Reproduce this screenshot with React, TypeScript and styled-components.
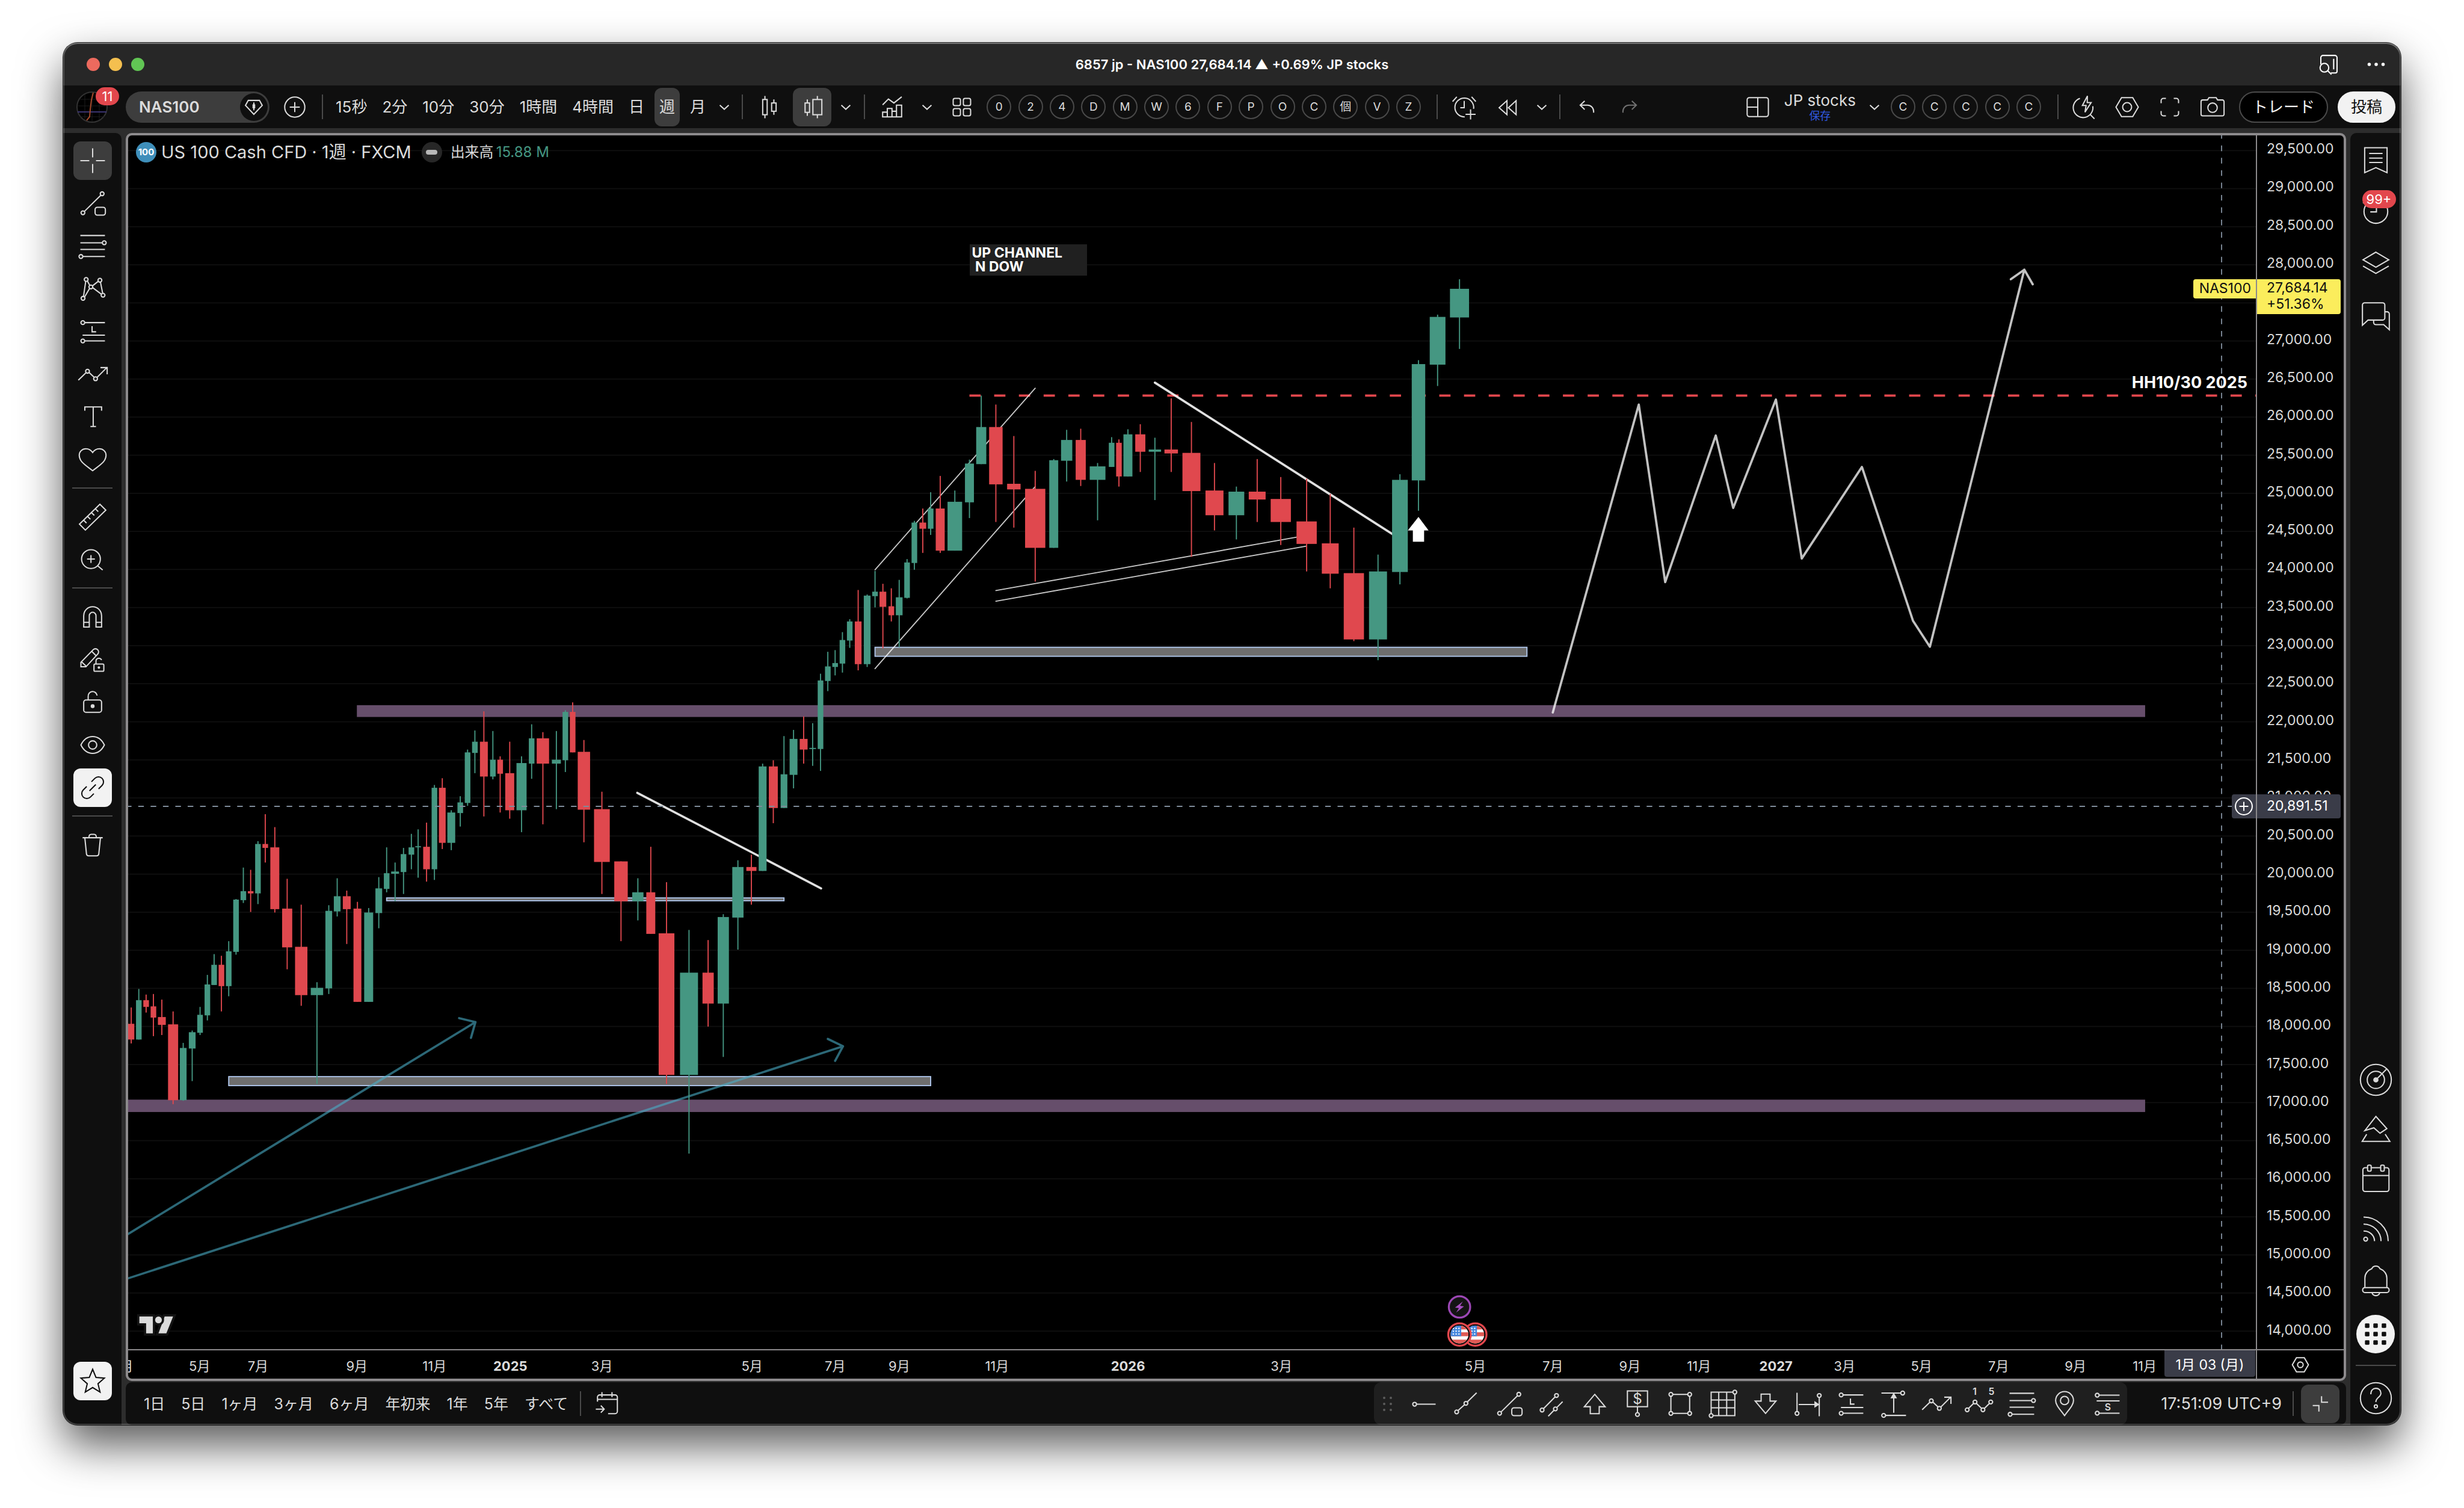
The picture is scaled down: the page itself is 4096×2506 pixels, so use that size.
import React from 'react';
import styled, { createGlobalStyle, css } from 'styled-components';

const c = {
  title: '#272727',
  bar: '#0f0f0f',
  gutter: '#2d2d2d',
  raised: '#3d3d3d',
  line: '#4a4a4a',
  text: '#dbdbdb',
  dim: '#707070',
  frame: '#8c8a8c',
  up: '#459782',
  down: '#e0484e',
  light: '#f2f2f2',
  alert: '#e2474d',
  quote: '#fbed5c',
  cursor: '#3a3c48',
};

const GlobalStyle = createGlobalStyle`
  *, *::before, *::after { box-sizing: border-box; }
  body { margin: 0; background: #fff; }
  body, button { font-family: Inter, "Noto Sans CJK JP", sans-serif; }
  button { appearance: none; border: 0; padding: 0; margin: 0; background: none; color: inherit; cursor: pointer; }
`;

/* ---------- window ---------- */

const Desktop = styled.div`
  display: flex;
  min-height: 100vh;
  padding: 71px 105px 138px;
  color: ${c.text};
`;

const Window = styled.div`
  position: relative;
  flex: 1;
  min-width: 0;
  display: flex;
  flex-direction: column;
  overflow: hidden;
  border-radius: 24px;
  background: ${c.gutter};
`;

const Shadow = styled.div`
  flex: 1;
  min-width: 0;
  display: flex;
  border-radius: 24px;
  box-shadow: 0 0 0 1px rgba(0, 0, 0, 0.8), 0 34px 72px rgba(0, 0, 0, 0.65);
`;

const Rim = styled.div`
  position: absolute;
  inset: 0;
  border-radius: 24px;
  pointer-events: none;
  box-shadow: inset 0 0 0 2px rgba(255, 255, 255, 0.2), inset 0 2px 0 rgba(255, 255, 255, 0.2);
`;

const TitleBar = styled.header`
  display: grid;
  grid-template-columns: 1fr auto 1fr;
  align-items: center;
  height: 71px;
  padding: 0 15px 0 39px;
  background: ${c.title};
`;

const Lights = styled.div`
  display: flex;
  gap: 15px;
`;

const Light = styled.button<{ $tone: string }>`
  width: 22px;
  height: 22px;
  border-radius: 50%;
  background: ${(p) => p.$tone};
`;

const WindowTitle = styled.h1`
  margin: 0;
  padding-right: 24px;
  font-size: 22px;
  line-height: 32px;
  font-weight: 600;
  color: #fff;
`;

const TitleActions = styled.div`
  display: flex;
  justify-content: flex-end;
  gap: 27px;
  color: #fff;
`;

/* ---------- shared controls ---------- */

const IconButton = styled.button<{ $on?: boolean; $light?: boolean }>`
  flex: none;
  display: flex;
  align-items: center;
  justify-content: center;
  width: 64px;
  height: 64px;
  border-radius: 12px;
  ${(p) => p.$on && css`background: ${c.raised};`}
  ${(p) => p.$light && css`background: ${c.light}; color: #0f0f0f;`}
  &:disabled { color: ${c.dim}; }
`;

const ChevronButton = styled.button`
  flex: none;
  display: flex;
  align-items: center;
  justify-content: center;
  width: 34px;
  height: 64px;
`;

const VLine = styled.span`
  flex: none;
  width: 2px;
  height: 41px;
  background: ${c.line};
`;

const HLine = styled.hr`
  width: 67px;
  height: 2px;
  margin: 7px 0 8px;
  border: 0;
  background: ${c.line};
`;

const Count = styled.span`
  position: absolute;
  display: flex;
  align-items: center;
  justify-content: center;
  height: 30px;
  border-radius: 15px;
  background: ${c.alert};
  color: #fff;
  font-size: 22px;
  line-height: 30px;
`;

const Svg = styled.svg`
  flex: none;
  display: block;
  overflow: visible;
`;

type IconProps = { box?: number; size?: number; d?: string; children?: React.ReactNode };

/* Strokes are about one unit wide; a 28-unit box is drawn 52px wide. */
const Icon = ({ box = 28, size = 52, d, children }: IconProps) => (
  <Svg width={size} height={size} viewBox={`0 0 ${box} ${box}`} fill="none" stroke="currentColor" strokeWidth={1.1} aria-hidden="true">
    {d && <path d={d} />}
    {children}
  </Svg>
);

const Dots = ({ at, r = 1.7 }: { at: number[][]; r?: number }) => (
  <>
    {at.map(([x, y]) => (
      <circle key={`${x}-${y}`} cx={x} cy={y} r={r} />
    ))}
  </>
);

const Chevron = () => <Icon d="M10 12.3l4 3.6 4-3.6" />;

/* ---------- top toolbar ---------- */

const Toolbar = styled.nav`
  display: flex;
  align-items: center;
  justify-content: space-between;
  height: 71px;
  padding: 0 9px 0 22px;
  background: ${c.bar};
`;

const Cluster = styled.div`
  display: flex;
  align-items: center;
`;

const Spaced = styled(Cluster)<{ $gap: number }>`
  gap: ${(p) => p.$gap}px;
`;

const Account = styled.button`
  position: relative;
  width: 52px;
  height: 52px;
  margin-right: 30px;
  ${Count} { left: 32px; top: -7px; width: 39px; }
`;

const SymbolButton = styled.button`
  display: flex;
  align-items: center;
  justify-content: space-between;
  width: 239px;
  height: 52px;
  padding: 0 3px 0 22px;
  border-radius: 26px;
  background: ${c.raised};
  font-size: 26px;
  line-height: 32px;
  font-weight: 600;
`;

const SymbolTag = styled.span`
  display: flex;
  align-items: center;
  justify-content: center;
  width: 46px;
  height: 46px;
  border-radius: 50%;
  background: ${c.bar};
`;

const TextButton = styled.button<{ $on?: boolean }>`
  flex: none;
  height: 64px;
  padding: 0 8px;
  border-radius: 12px;
  font-size: 26px;
  line-height: 32px;
  background: ${(p) => (p.$on ? c.raised : 'none')};
`;

const Letters = styled.div<{ $width: number }>`
  display: flex;
  justify-content: space-between;
  width: ${(p) => p.$width}px;
`;

const Letter = styled.button`
  width: 41px;
  height: 41px;
  border: 2px solid ${c.line};
  border-radius: 50%;
  font-size: 19px;
  line-height: 24px;
  text-align: center;
`;

const LayoutName = styled.button`
  display: flex;
  flex-direction: column;
  align-items: center;
  font-size: 26px;
  line-height: 30px;
  small { font-size: 18px; line-height: 22px; color: #3059e0; }
`;

const Pill = styled.button<{ $solid?: boolean }>`
  height: 52px;
  border: 2px solid ${(p) => (p.$solid ? c.light : c.line)};
  border-radius: 26px;
  padding: 0 20px;
  background: ${(p) => (p.$solid ? c.light : '#000')};
  color: ${(p) => (p.$solid ? '#0f0f0f' : c.light)};
  font-size: 26px;
  line-height: 32px;
`;

const Gap = styled.span<{ $w: number }>`
  flex: none;
  width: ${(p) => p.$w}px;
`;

/* ---------- body ---------- */

const Body = styled.div`
  flex: 1;
  display: grid;
  grid-template-columns: 97px minmax(0, 1fr) 84px;
  column-gap: 7px;
  padding-top: 8px;
`;

const ToolRail = styled.aside`
  display: flex;
  flex-direction: column;
  align-items: center;
  gap: 7px;
  padding: 14px 0 41px;
  border-radius: 0 10px 0 0;
  background: ${c.bar};
`;

const PanelRail = styled.aside`
  display: flex;
  flex-direction: column;
  align-items: center;
  padding: 1px 0;
  border-radius: 10px 0 0 0;
  background: ${c.bar};
  ${HLine} { margin: 8px 0 10px; }
`;

const PanelButton = styled.button<{ $short?: boolean }>`
  position: relative;
  display: flex;
  align-items: center;
  justify-content: center;
  width: 67px;
  height: ${(p) => (p.$short ? 82 : 87)}px;
  ${Count} { left: 11px; top: 7px; width: 56px; }
`;

const Apps = styled.span`
  display: flex;
  align-items: center;
  justify-content: center;
  width: 64px;
  height: 64px;
  border-radius: 50%;
  background: ${c.light};
  color: #0f0f0f;
`;

const Push = styled.div`
  flex: 1;
`;

const Center = styled.main`
  display: grid;
  grid-template-rows: minmax(0, 1fr) 71px;
  row-gap: 2px;
`;

/* ---------- chart ---------- */

const ChartFrame = styled.section`
  display: grid;
  grid-template-columns: minmax(0, 1fr) 146px;
  grid-template-rows: minmax(0, 1fr) 49px;
  border: 4px solid ${c.frame};
  border-radius: 10px;
  background: #000;
  overflow: hidden;
`;

const Pane = styled.div`
  position: relative;
`;

const PaneDrawing = styled.svg`
  position: absolute;
  inset: 0;
  width: 100%;
  height: 100%;
`;

const Legend = styled.div`
  position: relative;
  display: flex;
  align-items: center;
  height: 56px;
  padding-left: 13px;
  font-size: 29px;
  line-height: 36px;
`;

const SymbolBadge = styled.span`
  width: 34px;
  height: 34px;
  margin-right: 8px;
  border-radius: 50%;
  background: #3f8fba;
  color: #fff;
  font-size: 15px;
  line-height: 34px;
  font-weight: 700;
  text-align: center;
`;

const StatusDot = styled.span`
  display: flex;
  align-items: center;
  justify-content: center;
  width: 34px;
  height: 34px;
  margin: 0 14px 0 17px;
  border-radius: 50%;
  background: #272727;
  &::after { content: ""; width: 19px; height: 8px; border-radius: 4px; background: #b8b8b8; }
`;

const Volume = styled.span`
  font-size: 24px;
  line-height: 32px;
  b { margin-left: 4px; font-weight: 400; color: ${c.up}; }
`;

const Note = styled.p`
  position: absolute;
  width: 195px;
  height: 52px;
  margin: 0;
  padding: 3px 4px;
  background: #202020;
  color: #fff;
  font-size: 23px;
  line-height: 23px;
  font-weight: 700;
  white-space: pre;
`;

const LevelName = styled.p`
  position: absolute;
  right: 14px;
  margin: 0;
  color: #fff;
  font-size: 27px;
  line-height: 32px;
  font-weight: 700;
`;

const SymbolFlag = styled.span`
  position: absolute;
  right: 0;
  height: 32px;
  padding: 0 8px 0 10px;
  border-radius: 4px 0 0 4px;
  background: ${c.quote};
  color: #0f0f0f;
  font-size: 23px;
  line-height: 30px;
`;

const AddAtPrice = styled.button`
  position: absolute;
  right: 0;
  display: flex;
  align-items: center;
  justify-content: center;
  width: 40px;
  height: 40px;
  border-radius: 4px 0 0 4px;
  background: ${c.cursor};
  color: #fff;
`;

const PriceAxis = styled.div`
  position: relative;
  border-left: 2px solid ${c.frame};
  font-size: 23px;
  line-height: 28px;
`;

const PriceList = styled.ol`
  display: flex;
  flex-direction: column;
  justify-content: space-between;
  height: 100%;
  margin: 0;
  padding: 8px 0 18px 16px;
  list-style: none;
  li { height: 28px; }
`;

const PriceTag = styled.div<{ $cursor?: boolean }>`
  position: absolute;
  left: 0;
  width: 139px;
  height: ${(p) => (p.$cursor ? 40 : 58)}px;
  padding: ${(p) => (p.$cursor ? 5 : 1)}px 0 0 16px;
  border-radius: 0 4px 4px 0;
  background: ${(p) => (p.$cursor ? c.cursor : c.quote)};
  color: ${(p) => (p.$cursor ? '#fff' : '#0f0f0f')};
  line-height: ${(p) => (p.$cursor ? 28 : 27)}px;
`;

const TimeAxis = styled.div`
  position: relative;
  overflow: hidden;
  border-top: 2px solid ${c.frame};
  font-size: 22px;
  line-height: 28px;
`;

const TimeLabel = styled.span<{ $year: boolean }>`
  position: absolute;
  top: 12px;
  width: 80px;
  margin-left: -39px;
  text-align: center;
  font-weight: ${(p) => (p.$year ? 700 : 400)};
`;

const TimeTag = styled.span`
  position: absolute;
  right: 1px;
  top: 0;
  width: 151px;
  height: 44px;
  padding-top: 10px;
  border-radius: 0 0 4px 4px;
  background: ${c.cursor};
  color: #fff;
  font-size: 23px;
  text-align: center;
`;

const AxisCorner = styled.button`
  display: flex;
  align-items: center;
  justify-content: center;
  border-top: 2px solid ${c.frame};
  border-left: 2px solid ${c.frame};
`;

/* ---------- bottom bar ---------- */

const BottomBar = styled.footer`
  display: flex;
  align-items: center;
  padding: 0 11px 0 22px;
  border-radius: 10px;
  background: ${c.bar};
`;

const RangeButton = styled(TextButton)`
  font-size: 25px;
`;

const DrawTools = styled.div`
  display: flex;
  align-items: center;
  gap: 7px;
  align-self: stretch;
  padding: 0 1px 0 15px;
  border-radius: 12px;
  background: #1f1f1f;
`;

const Grip = styled.span`
  display: grid;
  grid-template-columns: repeat(2, 4px);
  gap: 6px 7px;
  width: 29px;
  i { width: 4px; height: 4px; border-radius: 50%; background: #5c5c5c; }
`;

const Clock = styled.time`
  margin: 0 18px 0 auto;
  font-size: 27px;
  line-height: 32px;
`;

/* ---------- data ---------- */

const intervals = ['15秒', '2分', '10分', '30分', '1時間', '4時間', '日', '週', '月'];
const favourites = ['0', '2', '4', 'D', 'M', 'W', '6', 'F', 'P', 'O', 'C', '個', 'V', 'Z'];
const ranges = ['1日', '5日', '1ヶ月', '3ヶ月', '6ヶ月', '年初来', '1年', '5年', 'すべて'];

const TOP_PRICE = 29500;
const STEP = 500;
/* The last-price tag sits on this level, so its own label is left out. */
const TAGGED_PRICE = 27500;
const prices = Array.from({ length: 32 }, (_, i) => TOP_PRICE - i * STEP);
const money = (v: number) => v.toLocaleString('en-US', { minimumFractionDigits: 2 });

/* The pane is drawn on a canvas of these units. */
const PANE = { x: 228, y: 240, w: 3786, h: 2160 };
const left = (x: number) => `${((x - PANE.x) / PANE.w) * 100}%`;
const top = (y: number) => `${((y - PANE.y) / PANE.h) * 100}%`;
const gridY = (i: number) => 267 + i * 67.77;

const months: [string, number][] = [
  ['3月', 217], ['5月', 354], ['7月', 458], ['9月', 634], ['11月', 772], ['2025', 907], ['3月', 1070],
  ['5月', 1337], ['7月', 1485], ['9月', 1599], ['11月', 1773], ['2026', 2006], ['3月', 2279], ['5月', 2624],
  ['7月', 2762], ['9月', 2899], ['11月', 3022], ['2027', 3159], ['3月', 3281], ['5月', 3418], ['7月', 3555],
  ['9月', 3692], ['11月', 3815],
];

/* A bar is: left, right, body top, body bottom, wick top, wick bottom, 1 for a rise. */
type Bar = [number, number, number, number, number, number, 0 | 1];
type Series = { x: number; y: number; kx: number; ky: number; bars: Bar[] };

const series: Series[] = [
  {
    x: 210, y: 1200, kx: 0.574, ky: 0.5421,
    bars: [
      [31, 51, 1146, 1197, 1092, 1210, 0], [56, 73, 1068, 1197, 1031, 1197, 1], [78, 96, 1068, 1090, 1050, 1109, 0],
      [101, 118, 1088, 1125, 1048, 1186, 0], [124, 148, 1123, 1149, 1066, 1182, 0], [155, 186, 1147, 1396, 1105, 1409, 0],
      [192, 213, 1225, 1396, 1208, 1398, 1], [220, 240, 1173, 1227, 1168, 1334, 1], [246, 263, 1116, 1175, 1090, 1182, 1],
      [268, 286, 1016, 1118, 985, 1134, 1], [289, 307, 952, 1018, 917, 1018, 1], [312, 329, 952, 1022, 922, 1105, 0],
      [335, 352, 908, 1022, 874, 1055, 1], [357, 375, 738, 909, 736, 919, 1], [380, 397, 710, 740, 633, 749, 1],
      [402, 420, 710, 718, 640, 778, 0], [425, 443, 555, 718, 546, 753, 1], [448, 465, 555, 568, 457, 616, 0],
      [472, 500, 566, 769, 500, 780, 0], [509, 540, 767, 895, 670, 967, 0], [549, 587, 893, 1051, 754, 1087, 0],
      [598, 636, 1028, 1051, 1009, 1343, 1], [643, 664, 775, 1029, 756, 1048, 1], [669, 690, 727, 777, 668, 793, 1],
      [697, 721, 727, 769, 708, 884, 0], [730, 754, 767, 1074, 745, 1074, 0], [763, 791, 780, 1074, 766, 1074, 1],
      [798, 819, 701, 782, 664, 832, 1], [824, 841, 651, 703, 566, 714, 1], [847, 871, 646, 653, 616, 743, 1],
      [876, 894, 588, 647, 568, 719, 1], [901, 918, 566, 590, 522, 638, 1], [922, 939, 563, 566, 507, 666, 1],
      [946, 967, 564, 638, 485, 679, 0], [972, 990, 371, 638, 362, 673, 1], [995, 1016, 371, 552, 339, 572, 0],
      [1021, 1045, 452, 552, 445, 576, 1], [1052, 1070, 419, 454, 398, 498, 1], [1075, 1092, 255, 421, 245, 430, 1],
      [1098, 1115, 220, 256, 183, 323, 1], [1122, 1146, 220, 334, 120, 465, 0], [1153, 1171, 279, 334, 184, 343, 1],
      [1176, 1193, 279, 325, 267, 452, 0], [1200, 1228, 323, 445, 220, 472, 0], [1235, 1267, 290, 445, 267, 517, 1],
      [1274, 1291, 208, 291, 162, 341, 1], [1298, 1336, 208, 291, 188, 491, 0], [1345, 1373, 279, 291, 184, 441, 1],
      [1378, 1396, 122, 280, 116, 319, 1], [1401, 1418, 122, 255, 90, 255, 0], [1425, 1463, 253, 443, 214, 550, 0],
      [1476, 1524, 441, 614, 384, 719, 0],
    ],
  },
  {
    x: 1000, y: 1100, kx: 0.4464, ky: 0.6378,
    bars: [
      [208, 262, 677, 789, 677, 900, 0], [280, 325, 764, 789, 724, 842, 1], [336, 372, 764, 880, 637, 880, 0],
      [385, 448, 878, 1273, 735, 1298, 0], [470, 542, 988, 1273, 869, 1493, 1], [560, 605, 988, 1074, 897, 1138, 0],
      [620, 665, 833, 1074, 825, 1223, 1], [679, 724, 693, 834, 674, 924, 1], [735, 775, 693, 704, 659, 798, 0],
      [784, 815, 412, 704, 405, 704, 1], [824, 860, 412, 528, 395, 571, 0], [871, 898, 434, 528, 328, 528, 1],
      [907, 939, 336, 436, 310, 474, 1], [948, 979, 336, 365, 273, 405, 0], [986, 1012, 361, 364, 292, 411, 1],
      [1019, 1042, 172, 364, 154, 425, 1], [1048, 1071, 133, 174, 93, 202, 1], [1077, 1100, 124, 135, 88, 158, 1],
      [1107, 1129, 60, 125, 38, 151, 1], [1136, 1158, 8, 61, 2, 82, 1],
    ],
  },
  {
    x: 1400, y: 420, kx: 0.8291, ky: 0.5102,
    bars: [
      [146, 160, 1343, 1492, 1233, 1513, 0], [165, 180, 1252, 1492, 1249, 1501, 1], [183, 195, 1239, 1254, 1166, 1294, 1],
      [199, 213, 1239, 1292, 1211, 1436, 0], [218, 230, 1290, 1321, 1227, 1343, 0], [234, 248, 1258, 1321, 1198, 1432, 1],
      [252, 264, 1137, 1260, 1125, 1262, 1], [268, 280, 998, 1139, 992, 1162, 1], [285, 299, 998, 1019, 949, 1103, 0],
      [303, 315, 949, 1019, 892, 1041, 1], [320, 339, 949, 1096, 835, 1103, 0], [345, 376, 925, 1096, 886, 1096, 1],
      [382, 402, 792, 927, 778, 982, 1], [406, 428, 664, 794, 555, 794, 1], [434, 463, 664, 864, 586, 996, 0],
      [473, 502, 862, 882, 696, 1015, 0], [511, 555, 880, 1086, 817, 1203, 0], [563, 583, 780, 1086, 776, 1086, 1],
      [589, 613, 710, 782, 674, 855, 1], [620, 642, 710, 849, 670, 870, 0], [650, 684, 802, 849, 790, 990, 1],
      [691, 703, 719, 804, 700, 804, 1], [707, 719, 719, 837, 708, 872, 0], [722, 742, 690, 837, 672, 837, 1],
      [748, 770, 690, 751, 655, 821, 0], [777, 803, 743, 751, 702, 919, 1], [811, 839, 743, 757, 564, 821, 0],
      [849, 888, 755, 888, 647, 1117, 0], [899, 937, 886, 972, 790, 1025, 0], [948, 982, 890, 972, 872, 1056, 1],
      [991, 1028, 890, 917, 776, 996, 0], [1038, 1082, 915, 996, 839, 1076, 0], [1094, 1137, 994, 1072, 845, 1168, 0],
      [1148, 1184, 1070, 1176, 898, 1227, 0], [1195, 1239, 1174, 1405, 1015, 1411, 0], [1250, 1288, 1168, 1405, 1109, 1478, 1],
      [1299, 1333, 849, 1170, 829, 1213, 1], [1341, 1370, 445, 851, 431, 956, 1], [1380, 1414, 280, 447, 272, 521, 1],
      [1423, 1464, 182, 282, 149, 392, 1],
    ],
  },
];

const Candles = () => (
  <>
    {series.flatMap((s) =>
      s.bars.map(([l, r, bodyTop, bodyBottom, wickTop, wickBottom, rise]) => {
        const x1 = Math.round(s.x + l * s.kx);
        const x2 = Math.round(s.x + r * s.kx);
        const y = (v: number) => Math.round(s.y + v * s.ky);
        return (
          <g key={x1} fill={rise ? c.up : c.down}>
            <rect x={(x1 + x2) / 2 - 1} y={y(wickTop)} width={2} height={y(wickBottom) - y(wickTop)} />
            <rect x={x1} y={y(bodyTop)} width={x2 - x1} height={Math.max(2, y(bodyBottom) - y(bodyTop))} />
          </g>
        );
      }),
    )}
  </>
);

const star = 'M0-2l.6 1.3 1.4.1-1.1.9.4 1.4L0 1l-1.3.7.4-1.4L-2-.6l1.4-.1z';

const FlagEvent = ({ x }: { x: number }) => (
  <g transform={`translate(${x} 2374)`}>
    <circle r={20} fill="#0a0a0a" stroke={c.alert} strokeWidth={3.5} />
    <g clipPath="url(#flagDisc)">
      <rect x={-16} y={-16} width={32} height={32} fill="#fafafa" />
      <path d="M-16-16h32v7h-32zM-16-4h32v7h-32zM-16 9h32v8h-32z" fill="#df5a55" />
      <rect x={-16} y={-16} width={19} height={19} fill="#4387dd" />
      {[-11, -6, -1].map((sx) => [-11, -6, -1].map((sy) => <path key={`${sx}${sy}`} transform={`translate(${sx} ${sy})`} d={star} fill="#fff" />))}
    </g>
  </g>
);

const ChartDrawing = () => (
  <PaneDrawing viewBox={`${PANE.x} ${PANE.y} ${PANE.w} ${PANE.h}`} preserveAspectRatio="none" role="img" aria-label="NAS100">
    <defs>
      <clipPath id="flagDisc"><circle r={16} /></clipPath>
    </defs>
    {prices.map((p, i) => (
      <rect key={p} x={PANE.x} y={gridY(i) - 1} width={PANE.w} height={2} fill="#0f0f0f" />
    ))}
    <g fill="#664e6b">
      <rect x={635} y={1254} width={3182} height={21} />
      <rect x={228} y={1956} width={3589} height={22} />
    </g>
    <g fill="#6e6e6e" stroke="#aec5ea" strokeWidth={2}>
      <rect x={407} y={1915} width={1249} height={16} />
      <rect x={688} y={1597} width={707} height={5} />
      <rect x={1557} y={1151} width={1160} height={16} />
    </g>
    <g stroke="#49adc6" strokeOpacity={0.6} strokeWidth={4} strokeLinecap="round" strokeLinejoin="round" fill="none">
      <path d="M228 2195L846 1818M817 1811L846 1818 838 1846" />
      <path d="M228 2274L1500 1861M1473 1848L1500 1861 1486 1887" />
    </g>
    <path d="M1725 703H4014" stroke={c.alert} strokeWidth={4} strokeDasharray="20 24" />
    <g stroke="#fff" strokeLinecap="round" strokeLinejoin="round" fill="none">
      <path d="M1134 1410L1461 1580M2055 680L2491 958" strokeOpacity={0.88} strokeWidth={4} />
      <path d="M1557 1013L1842 690M1557 1189L1842 865M1772 1050L2324 952M1772 1069L2324 971" strokeOpacity={0.78} strokeWidth={2} />
      <path d="M2763 1267L2916 719 2963 1035 3053 774 3084 903 3160 710 3206 993 3313 830 3404 1104 3434 1150 3602 479M3578 496L3602 479 3617 505" strokeOpacity={0.76} strokeWidth={4} />
    </g>
    <Candles />
    <path d="M2524 919l18 24h-8v20h-20v-20h-9z" fill="#fff" />
    <g stroke="#7f8c9a" strokeWidth={2} strokeDasharray="10 12" strokeDashoffset={4}>
      <path d="M228 1434H3972" />
      <path d="M3953 240V2400" />
    </g>
    <g fill={c.text} stroke="#131313" strokeWidth={8} paintOrder="stroke">
      <path d="M248 2342h24v30h-12v-18h-12z" />
      <path d="M293 2342h15l-12 30h-14z" />
      <circle cx={282} cy={2348} r={6} />
    </g>
    <circle cx={2597} cy={2325} r={19} fill="#141414" stroke="#9c47b5" strokeWidth={3.5} />
    <path d="M2603 2315l-14 11 7 1-5 8 14-11-7-1z" fill="#a64fc0" />
    <FlagEvent x={2625} />
    <FlagEvent x={2597} />
  </PaneDrawing>
);

/* ---------- drawing tool icons ---------- */

const TrendTemplate = () => (
  <Icon d="M6.6 21.2L21.3 6.7">
    <Dots at={[[5.3, 22.4], [22.5, 5.4]]} />
    <rect x={16.2} y={17.5} width={9.2} height={7} rx={2} />
  </Icon>
);
const Fib = () => (
  <Icon d="M3 4.5h22M3 11h19.6M3 17h22M5.3 23.3H25">
    <Dots at={[[24.4, 11], [3.5, 23.3]]} />
  </Icon>
);
const LongPosition = () => (
  <Icon d="M7 6h18M5 17.2h20M7 22.4h18M13.5 9.2v5h3.6">
    <Dots at={[[5.2, 6], [5.2, 22.4]]} />
  </Icon>
);
const PathArrow = () => (
  <Icon d="M1.2 19.3L8 12.6M10.8 12.4l4.6 4.3M17.9 16.8L26.7 8M21 8h6v6">
    <Dots at={[[9.4, 11.3], [16.6, 18]]} />
  </Icon>
);

const leftTools: Record<string, React.ReactNode> = {
  トレンドライン: <TrendTemplate />,
  フィボナッチ: <Fib />,
  パターン: (
    <Icon d="M5.8 20.9l2-13.6M6.7 21.4l4.6-7.8M9.3 7l2.2 4M13.8 11.4l5.3-4.2M14.1 13l7.7 5.8M21 8l2 10">
      <Dots at={[[5.4, 22.5], [8.2, 5.6], [12.4, 12.3], [20.5, 6.3], [23.3, 19.7]]} />
    </Icon>
  ),
  予測: <LongPosition />,
  ブラシ: <PathArrow />,
  テキスト: <Icon d="M7 8.4V5h15v3.4M14.5 5v17.5M12 22.5h5" />,
  アイコン: <Icon d="M14 7.5C12.5 5.3 10.5 4.2 8 4.2 4.6 4.2 2 6.7 2 10c0 6 6 9 12 13.8 6-4.8 12-7.8 12-13.8 0-3.3-2.6-5.8-6-5.8-2.5 0-4.5 1.1-6 3.3z" />,
};

const measureTools: Record<string, React.ReactNode> = {
  計測: <Icon d="M2.2 20.5L20.5 2.7l5.3 5.3L7.5 25.8zM6 17l2.5 2.5M9.500 13.600l2.500 2.500M13 10.200l2.500 2.500M16.500 6.800L19 9.300" />,
  ズーム: <Icon d="M18.5 19.500l4.500 3.800M9 13.500h7M12.500 10v7"><circle cx={12.5} cy={13.5} r={8.4} /></Icon>,
};

const lockTools: Record<string, React.ReactNode> = {
  マグネット: <Icon d="M6 23.200V13a8 8 0 0 1 16 0v10.200h-5V13a3 3 0 0 0-6 0v10.200zM6 19h5M17 19h5" />,
  描画モード: (
    <Icon d="M3.5 20.500v-4L14.500 5.200a2.500 2.500 0 0 1 4 4L8 20.500zM13 6.500l4 4M4 16l4.300 4M17 18v-2.500a2.600 2.600 0 0 1 5-1">
      <rect x={15.2} y={18} width={8.8} height={6.5} rx={1} />
      <circle cx={19.6} cy={21.2} r={0.6} fill="currentColor" />
    </Icon>
  ),
  ロック: (
    <Icon d="M10 12V9a4 4 0 0 1 8-1">
      <rect x={6} y={12} width={16} height={11} rx={2} />
      <circle cx={14} cy={17.5} r={1.2} fill="currentColor" />
    </Icon>
  ),
  表示: <Icon d="M3.5 14C6 9 10 6.500 14 6.500S22 9 24.500 14C22 19 18 21.500 14 21.500S6 19 3.500 14z"><circle cx={14} cy={14} r={3.7} /></Icon>,
};

const drawTools: Record<string, React.ReactNode> = {
  水平レイ: <Icon d="M7.5 14.300h17"><Dots at={[[5.7, 14.3]]} /></Icon>,
  レイ: <Icon d="M6.2 20l6-5.300M14.600 12.300L23 4"><Dots at={[[5.1, 21.2], [13.4, 13.5]]} /></Icon>,
  テンプレート: <TrendTemplate />,
  平行チャネル: <Icon d="M6.3 18.300L16.800 7.700M10.600 25l5.200-5.300M18.200 17.300l5.300-5.300"><Dots at={[[5.1, 19.5], [18, 6.5], [17, 18.5]]} /></Icon>,
  上矢印: <Icon d="M14 5.500l9.300 11H18v6.200h-8v-6.200H4.700z" />,
  価格ラベル: (
    <Icon d="M14 16.500v5.300">
      <rect x={5} y={2.4} width={18} height={14.1} />
      <Dots at={[[14, 23.5]]} />
      <text x={14} y={14} fontSize={13} textAnchor="middle" fill="currentColor" stroke="none">$</text>
    </Icon>
  ),
  長方形: <Icon d="M7.5 5.500h13M7.500 22.500h13M5.700 7.300v13.400M22.500 7.300v13.400"><Dots at={[[5.7, 5.5], [22.5, 5.5], [5.7, 22.5], [22.5, 22.5]]} /></Icon>,
  ギャンボックス: <Icon d="M23 3.500H3.500v19.200M24.700 5.300v19.200H5.200M3.500 10.500h21.200M3.500 17.500h21.200M10.300 3.500v21M17.400 3.500v21"><Dots at={[[24.7, 3.5], [3.5, 24.5]]} /></Icon>,
  下矢印: <Icon d="M14 22.500l-9.300-11H10V5.300h8v6.200h5.300z" />,
  日付範囲: <Icon d="M3.9 4v16.700M23.800 25V8.300M5.400 14.500h15"><path d="M20 12.500l3 2-3 2z" fill="currentColor" /><Dots at={[[3.9, 22.5], [23.8, 6.5]]} /></Icon>,
  買いポジション: <LongPosition />,
  価格範囲: <Icon d="M3 4.300h17M6.700 24.300H25M14 8v14"><path d="M12 8.500l2-3.500 2 3.500z" fill="currentColor" /><Dots at={[[22, 4.3], [5, 24.3]]} /></Icon>,
  パス: <PathArrow />,
  エリオット波動: (
    <Icon d="M4.5 18l4.600-4.500M11.600 13.600l4.600 4.400M18.700 18l4.500-4.400">
      <Dots at={[[3.3, 19.3], [10.3, 12.3], [17.4, 19.3], [24.4, 12.3]]} />
      <g fontSize={8.5} fontWeight={600} textAnchor="middle" fill="currentColor" stroke="none">
        <text x={10} y={6}>1</text>
        <text x={25} y={6}>5</text>
      </g>
    </Icon>
  ),
  フィボナッチ: <Fib />,
  ピン: <Icon d="M14 24.500C10 19 6 15 6 11a8 8 0 0 1 16 0c0 4-4 8-8 13.500z"><circle cx={14} cy={11} r={3.7} /></Icon>,
  売りポジション: (
    <Icon d="M7 6.200h18M4.500 11.300H25M7 22.300h18">
      <Dots at={[[5, 6.2], [5, 22.3]]} />
      <text x={14.5} y={20} fontSize={8.5} fontWeight={600} textAnchor="middle" fill="currentColor" stroke="none">S</text>
    </Icon>
  ),
};

const ToolGroup = ({ tools }: { tools: Record<string, React.ReactNode> }) => (
  <>
    {Object.entries(tools).map(([name, icon]) => (
      <IconButton key={name} aria-label={name}>{icon}</IconButton>
    ))}
  </>
);

const LetterRow = ({ items, width }: { items: string[]; width: number }) => (
  <Letters $width={width}>
    {items.map((l, i) => (
      <Letter key={i}>{l}</Letter>
    ))}
  </Letters>
);

/* ---------- sections ---------- */

const TopToolbar = () => (
  <Toolbar>
    <Cluster>
      <Account aria-label="アカウント">
        <Svg width={52} height={52} viewBox="0 0 52 52">
          <circle cx={26} cy={26} r={25} fill="#000" stroke="#333" strokeWidth={2} />
          <path d="M6 13h40M3 24h46M6 42h40M14 5v42M26 2v48M38 5v42" stroke="#1c1c1c" />
          <path d="M2 34h48" stroke="#3b3470" strokeWidth={2} />
          <path d="M17 48l5-6 1-12 2-16 3-12" fill="none" stroke="#a3492c" strokeWidth={2} />
        </Svg>
        <Count>11</Count>
      </Account>
      <SymbolButton>
        NAS100
        <SymbolTag>
          <Icon d="M9 8h10l2.500 4.500L14 20.500 6.500 12.500zM14 9.800v7"><rect x={12.8} y={11.5} width={2.4} height={3.6} fill="currentColor" stroke="none" /></Icon>
        </SymbolTag>
      </SymbolButton>
      <Gap $w={10} />
      <IconButton aria-label="比較"><Icon d="M14 9.500v9M9.500 14h9"><circle cx={14} cy={14} r={9} /></Icon></IconButton>
      <Gap $w={13} />
      <VLine />
      <Gap $w={13} />
      <Spaced $gap={9}>
        {intervals.map((t) => (
          <TextButton key={t} $on={t === '週'}>{t}</TextButton>
        ))}
      </Spaced>
      <Gap $w={6} />
      <ChevronButton aria-label="時間足"><Chevron /></ChevronButton>
      <Gap $w={12} />
      <VLine />
      <Gap $w={12} />
      <Spaced $gap={7}>
        <IconButton aria-label="ローソク足"><Icon d="M10 4v3.200M10 20.800V24M18 7.200v3.100M18 17.700v3.100"><rect x={8} y={7.2} width={4} height={13.6} /><rect x={16} y={10.3} width={4} height={7.4} /></Icon></IconButton>
        <IconButton $on aria-label="出来高ローソク足"><Icon d="M9.7 7.200v3.100M9.700 18.700v3.100M18.700 4v3.200M18.700 20.800V24"><rect x={7.7} y={10.3} width={4} height={8.4} /><rect x={14.7} y={7.2} width={8} height={13.6} /></Icon></IconButton>
        <ChevronButton aria-label="チャートタイプ"><Chevron /></ChevronButton>
      </Spaced>
      <Gap $w={13} />
      <VLine />
      <Gap $w={13} />
      <Spaced $gap={9}>
        <IconButton aria-label="インジケーター"><Icon d="M5.5 12l5.200-5.200 4.900 3.500 7-5.500M5.500 22.700v-4.200h4.200v-3.300h4.200v2.500h4v-5.500h4.600v10.500zM9.700 18.500v4.200M13.900 17.700v5M17.900 17.700v5" /></IconButton>
        <ChevronButton aria-label="お気に入り"><Chevron /></ChevronButton>
        <IconButton aria-label="テンプレート">
          <Icon>
            {[6.2, 15.3].map((x) => [6.2, 15.3].map((y) => <rect key={`${x}${y}`} x={x} y={y} width={6.5} height={6.5} rx={1.5} />))}
          </Icon>
        </IconButton>
        <LetterRow items={favourites} width={722} />
      </Spaced>
      <Gap $w={26} />
      <VLine />
      <Gap $w={12} />
      <Spaced $gap={8}>
        <IconButton aria-label="アラート"><Icon d="M22.4 15.500A8.400 8.400 0 1 0 14.500 22.700M3.600 9l3.800-4.200M20.600 4.800L24.400 9M14 8.500v6h-3.500M19.700 16v9M15.200 20.500h9" /></IconButton>
        <IconButton aria-label="リプレイ"><Icon d="M13.5 8.200v12.500L6.500 14.500zM21.700 8.200v12.500L14.800 14.500z" /></IconButton>
        <ChevronButton aria-label="リプレイ設定"><Chevron /></ChevronButton>
      </Spaced>
      <Gap $w={12} />
      <VLine />
      <Gap $w={12} />
      <Spaced $gap={7}>
        <IconButton aria-label="元に戻す"><Icon d="M8 12.300h6.500a5.500 5.500 0 0 1 5.500 5.500V19M12 8.500l-4 3.800 4 3.800" /></IconButton>
        <IconButton aria-label="やり直す" disabled><Icon d="M20 12.300h-6.500A5.500 5.500 0 0 0 8 17.800V19M16 8.500l4 3.800-4 3.800" /></IconButton>
      </Spaced>
    </Cluster>
    <Cluster>
      <IconButton aria-label="レイアウト"><Icon d="M14 5.500v17M4.500 14H14"><rect x={4.5} y={5.5} width={19} height={17} rx={2} /></Icon></IconButton>
      <Gap $w={12} />
      <LayoutName>JP stocks<small>保存</small></LayoutName>
      <Gap $w={14} />
      <ChevronButton aria-label="レイアウト管理"><Chevron /></ChevronButton>
      <Gap $w={10} />
      <LetterRow items={['C', 'C', 'C', 'C', 'C']} width={250} />
      <Gap $w={27} />
      <VLine />
      <Gap $w={11} />
      <Spaced $gap={7}>
        <IconButton aria-label="クイック検索"><Icon d="M10 6.200a8.800 8.800 0 1 0 11.500 7M19 20.500l4 4M16.700 4l-4.500 8.500h3.300l-1 6 5.500-8.500h-3.500z" /></IconButton>
        <IconButton aria-label="設定"><Icon d="M9 5.500h10l5 8.500-5 8.500H9L4 14z"><circle cx={14} cy={14} r={4} /></Icon></IconButton>
        <IconButton aria-label="全画面"><Icon d="M6.2 10.500V8.200a2 2 0 0 1 2-2h2.300M17.500 6.200h2.300a2 2 0 0 1 2 2v2.300M21.800 17.500v2.300a2 2 0 0 1-2 2h-2.300M10.500 21.800H8.200a2 2 0 0 1-2-2v-2.300" /></IconButton>
        <IconButton aria-label="スナップショット"><Icon d="M9.5 7.600l1.300-2.100h6.400l1.300 2.100h4.300a1.500 1.500 0 0 1 1.500 1.500v11.200a1.500 1.500 0 0 1-1.500 1.500H5.200a1.500 1.500 0 0 1-1.500-1.500V9.100a1.500 1.500 0 0 1 1.500-1.500z"><circle cx={14} cy={14.5} r={4.2} /></Icon></IconButton>
      </Spaced>
      <Gap $w={12} />
      <Spaced $gap={16}>
        <Pill>トレード</Pill>
        <Pill $solid>投稿</Pill>
      </Spaced>
    </Cluster>
  </Toolbar>
);

const LeftRail = () => (
  <ToolRail>
    <IconButton $on aria-label="カーソル"><Icon d="M3 14h8M17 14h8M14 3v8M14 17v8" /></IconButton>
    <ToolGroup tools={leftTools} />
    <HLine />
    <ToolGroup tools={measureTools} />
    <HLine />
    <ToolGroup tools={lockTools} />
    <IconButton $light aria-label="同期">
      <Icon><path transform="rotate(-45 14 14)" d="M11 9.500H6.600a4.500 4.500 0 0 0 0 9H11M17 9.500h4.400a4.500 4.500 0 0 1 0 9H17M10 14h8" /></Icon>
    </IconButton>
    <HLine />
    <IconButton aria-label="削除"><Icon d="M5 7.600h18M7 7.600l1.500 14.500a2 2 0 0 0 2 1.700h7a2 2 0 0 0 2-1.700L21 7.600M10.700 7.500c0-2 .8-2.900 2-2.900h2.600c1.200 0 2 .9 2 2.900" /></IconButton>
    <Push />
    <IconButton $light aria-label="お気に入りツール"><Icon d="M14 3.500l3 7.300 7.500.6-5.700 5 1.800 7.500L14 19.800l-6.600 4.100 1.800-7.500-5.700-5 7.500-.6z" /></IconButton>
  </ToolRail>
);

const Wide = (props: IconProps) => <Icon box={36} size={67} {...props} />;

const RightRail = () => (
  <PanelRail>
    <PanelButton aria-label="ウォッチリスト"><Wide d="M8 7.200h20v22.300l-10-4.500-10 4.500zM12 12.400h12M12 16.500h12M12 20.400h12" /></PanelButton>
    <PanelButton aria-label="アラート 99+">
      <Wide d="M18.5 9v8.800h-5.500M6.500 10l3-3"><circle cx={18} cy={17.4} r={10.6} /></Wide>
      <Count>99+</Count>
    </PanelButton>
    <PanelButton aria-label="オブジェクトツリー"><Wide d="M18 7l11.500 6.800L18 20.500 6.500 13.800zM6.500 19.400L18 26l11.500-6.600" /></PanelButton>
    <PanelButton aria-label="チャット"><Wide d="M6 25.500V7.500a2 2 0 0 1 2-2h16a2 2 0 0 1 2 2v11.400a2 2 0 0 1-2 2H11zM26 13.500h2a2 2 0 0 1 2 2v14l-5-4.500h-7a2 2 0 0 1-2-2v-2" /></PanelButton>
    <Push />
    <PanelButton $short aria-label="スクリーナー"><Wide d="M19.5 16.500l8-8"><circle cx={18} cy={18} r={13.8} /><circle cx={18} cy={18} r={7.7} /><circle cx={18} cy={18} r={1.8} fill="currentColor" /></Wide></PanelButton>
    <PanelButton $short aria-label="パイン"><Wide d="M18 6.600l9.800 10.900-6.100 4.100-5.500-4.800-8 2.400zM9.800 22.500l-4 6.400h24.700l-4.200-6.500" /></PanelButton>
    <PanelButton $short aria-label="カレンダー"><Wide d="M10.5 8.300H8.400a2 2 0 0 0-2 2v17.300a2 2 0 0 0 2 2h19.300a2 2 0 0 0 2-2V10.300a2 2 0 0 0-2-2h-2.200M14 8.300h8M6.400 15.300h23.300"><rect x={10.6} y={6} width={3.2} height={5.4} rx={1} /><rect x={22.3} y={6} width={3.2} height={5.4} rx={1} /></Wide></PanelButton>
    <PanelButton aria-label="ニュース"><Wide d="M7 19.700a9.500 9 0 0 1 9.800 9M7 13.600a15.600 15.100 0 0 1 15.600 15.100M7 7.300a22 21.400 0 0 1 22 21.400"><circle cx={8.9} cy={27} r={1.7} /></Wide></PanelButton>
    <PanelButton aria-label="通知"><Wide d="M8.2 23.500V15c0-3.800 2.500-7 6.200-8.400.6-1.500 1.700-2.300 3.600-2.300s3 .8 3.600 2.300C25.300 8 27.800 11.200 27.800 15v8.500M14.500 28c.4 1.600 1.700 2.700 3.500 2.700s3.100-1.100 3.500-2.700"><rect x={6.2} y={23.5} width={23.6} height={4.4} rx={2} /></Wide></PanelButton>
    <PanelButton aria-label="製品">
      <Apps>
        <Icon>
          {[6.5, 14, 21.5].map((x) => [6.5, 14, 21.5].map((y) => <rect key={`${x}${y}`} x={x - 2} y={y - 2} width={4} height={4} rx={0.8} fill="currentColor" stroke="none" />))}
        </Icon>
      </Apps>
    </PanelButton>
    <HLine />
    <PanelButton aria-label="ヘルプ"><Wide d="M13.5 14.500c0-3.500 1.900-5.300 4.500-5.300s4.500 1.700 4.500 4.300c0 3.800-4.500 3.700-4.500 8"><circle cx={18} cy={18} r={13.8} /><circle cx={18} cy={25.3} r={1.4} /></Wide></PanelButton>
  </PanelRail>
);

const Chart = () => (
  <ChartFrame>
    <Pane>
      <ChartDrawing />
      <Legend>
        <SymbolBadge>100</SymbolBadge>
        US 100 Cash CFD · 1週 · FXCM
        <StatusDot />
        <Volume>出来高<b>15.88 M</b></Volume>
      </Legend>
      <Note style={{ left: left(1725), top: top(434) }}>{'UP CHANNEL\n N DOW'}</Note>
      <LevelName style={{ top: top(663) }}>HH10/30 2025</LevelName>
      <SymbolFlag style={{ top: top(496) }}>NAS100</SymbolFlag>
      <AddAtPrice aria-label="この価格に追加" style={{ top: top(1413) }}>
        <Icon d="M14 10v8M10 14h8"><circle cx={14} cy={14} r={7.5} /></Icon>
      </AddAtPrice>
    </Pane>
    <PriceAxis>
      <PriceList>
        {prices.map((p) => (
          <li key={p}>{p !== TAGGED_PRICE && money(p)}</li>
        ))}
      </PriceList>
      <PriceTag style={{ top: top(496) }}>27,684.14<br />+51.36%</PriceTag>
      <PriceTag $cursor style={{ top: top(1413) }}>20,891.51</PriceTag>
    </PriceAxis>
    <TimeAxis>
      {months.map(([name, x]) => (
        <TimeLabel key={x} $year={name.length === 4} style={{ left: left(x) }}>{name}</TimeLabel>
      ))}
      <TimeTag>1月 03 (月)</TimeTag>
    </TimeAxis>
    <AxisCorner aria-label="軸の設定"><Icon d="M10.5 7.700h7l3.700 6.300-3.700 6.300h-7L6.800 14z"><circle cx={14} cy={14} r={2.5} /></Icon></AxisCorner>
  </ChartFrame>
);

const Footer = () => (
  <BottomBar>
    <Spaced $gap={11}>
      {ranges.map((r) => (
        <RangeButton key={r}>{r}</RangeButton>
      ))}
    </Spaced>
    <Gap $w={12} />
    <VLine />
    <Gap $w={11} />
    <IconButton aria-label="日付へ移動"><Icon d="M5.5 12V8a2 2 0 0 1 2-2h13.800a2 2 0 0 1 2 2v12.700a2 2 0 0 1-2 2H15M9.500 3.500v4.500M18.500 3.500v4.500M5.500 10h17.800M4 18.700h7.500M8.500 15.500l3 3.200-3 3.200" /></IconButton>
    <Push />
    <DrawTools>
      <Grip><i /><i /><i /><i /><i /><i /></Grip>
      <ToolGroup tools={drawTools} />
    </DrawTools>
    <Gap $w={56} />
    <Clock>17:51:09 UTC+9</Clock>
    <VLine />
    <Gap $w={12} />
    <IconButton $on aria-label="縮小"><Icon d="M15.2 7.200v5.300H21M7.300 15.500h5.500v5.300" /></IconButton>
  </BottomBar>
);

export default function App() {
  return (
    <Desktop>
      <GlobalStyle />
      <Shadow>
        <Window>
          <TitleBar>
            <Lights>
              <Light $tone="#ec6a5e" aria-label="閉じる" />
              <Light $tone="#f4bf4f" aria-label="しまう" />
              <Light $tone="#61c554" aria-label="拡大" />
            </Lights>
            <WindowTitle>6857 jp - NAS100 27,684.14 ▲ +0.69% JP stocks</WindowTitle>
            <TitleActions>
              <Icon d="M7 14V8a2 2 0 0 1 2-2h10.500a2 2 0 0 1 2 2v12.200a1.500 1.500 0 0 1-1.500 1.500h-4M18.500 9v9.500M13 19.500l3.500 3.500"><circle cx={10.2} cy={17} r={3.9} /></Icon>
              <Icon><circle cx={7.8} cy={14} r={1.5} fill="currentColor" stroke="none" /><circle cx={14} cy={14} r={1.5} fill="currentColor" stroke="none" /><circle cx={20.2} cy={14} r={1.5} fill="currentColor" stroke="none" /></Icon>
            </TitleActions>
          </TitleBar>
          <TopToolbar />
          <Body>
            <LeftRail />
            <Center>
              <Chart />
              <Footer />
            </Center>
            <RightRail />
          </Body>
          <Rim />
        </Window>
      </Shadow>
    </Desktop>
  );
}
